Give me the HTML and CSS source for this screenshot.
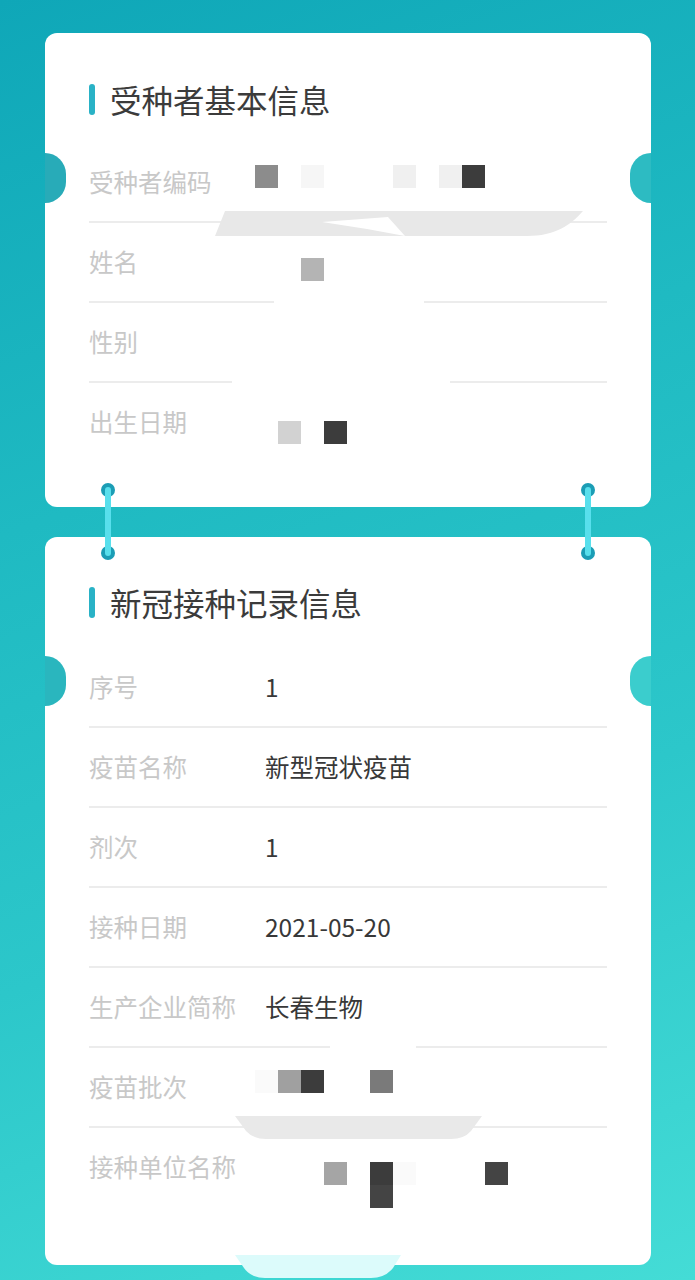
FILE: index.html
```html
<!DOCTYPE html>
<html lang="zh-CN">
<head>
<meta charset="utf-8">
<title>接种信息</title>
<link rel="stylesheet" href="styles.css">
</head>
<body>
<main class="page">
  <section class="card card-basic">
    <span class="notch notch-left"></span>
    <span class="notch notch-right"></span>
    <h2 class="title">受种者基本信息</h2>
    <div class="rows">
      <div class="row">
        <span class="label">受种者编码</span>
        <div class="value">
          <div class="mosaic mz-a">
            <i class="px k8c"></i><i class="px"></i><i class="px kf5"></i><i class="px"></i><i class="px"></i><i class="px"></i><i class="px kf0"></i><i class="px"></i><i class="px kf0"></i><i class="px k3c"></i>
          </div>
        </div>
      </div>
      <div class="row">
        <span class="label">姓名</span>
        <div class="value">
          <div class="mosaic mz-b">
            <i class="px"></i><i class="px"></i><i class="px kb4"></i>
          </div>
        </div>
      </div>
      <div class="row">
        <span class="label">性别</span>
        <div class="value"></div>
      </div>
      <div class="row">
        <span class="label">出生日期</span>
        <div class="value">
          <div class="mosaic mz-c">
            <i class="px"></i><i class="px kd2"></i><i class="px"></i><i class="px k3c"></i>
          </div>
        </div>
      </div>
    </div>
    <svg class="smudge smudge-1" viewBox="0 0 368 25" aria-hidden="true">
      <path d="M10 0 H368 C356 14 340 25 312 25 H0 Z" fill="#e8e8e8"/>
      <path d="M107 11 L173 6 L190 25 L152 18 Z" fill="#ffffff"/>
    </svg>
    <span class="patch patch-1"></span>
    <span class="patch patch-2"></span>
  </section>

  <section class="card card-record">
    <span class="notch notch-left"></span>
    <span class="notch notch-right"></span>
    <span class="link link-left"><i class="dot"></i><i class="dot"></i></span>
    <span class="link link-right"><i class="dot"></i><i class="dot"></i></span>
    <h2 class="title">新冠接种记录信息</h2>
    <div class="rows">
      <div class="row">
        <span class="label">序号</span>
        <div class="value">1</div>
      </div>
      <div class="row">
        <span class="label">疫苗名称</span>
        <div class="value">新型冠状疫苗</div>
      </div>
      <div class="row">
        <span class="label">剂次</span>
        <div class="value">1</div>
      </div>
      <div class="row">
        <span class="label">接种日期</span>
        <div class="value">2021-05-20</div>
      </div>
      <div class="row">
        <span class="label">生产企业简称</span>
        <div class="value">长春生物</div>
      </div>
      <div class="row">
        <span class="label">疫苗批次</span>
        <div class="value">
          <div class="mosaic mz-d">
            <i class="px kfa"></i><i class="px ka0"></i><i class="px k3c"></i><i class="px"></i><i class="px"></i><i class="px k7a"></i>
          </div>
        </div>
      </div>
      <div class="row">
        <span class="label">接种单位名称</span>
        <div class="value">
          <div class="mosaic mz-e">
            <i class="px"></i><i class="px"></i><i class="px"></i><i class="px ka5"></i><i class="px"></i><i class="px k3c"></i><i class="px kfa"></i><i class="px"></i><i class="px"></i><i class="px"></i><i class="px k44"></i>
            <i class="px"></i><i class="px"></i><i class="px"></i><i class="px"></i><i class="px"></i><i class="px k44"></i>
          </div>
        </div>
      </div>
    </div>
    <span class="patch patch-3"></span>
    <svg class="smudge smudge-2" viewBox="0 0 247 23" aria-hidden="true">
      <path d="M0 0 H247 L236 15 Q229 23 216 23 H31 Q18 23 11 15 Z" fill="#e9e9e9"/>
    </svg>
    <svg class="smudge smudge-3" viewBox="0 0 166 23" aria-hidden="true">
      <path d="M0 0 H166 L158 13 Q150 23 136 23 H30 Q16 23 9 13 Z" fill="#dcfbfb"/>
    </svg>
  </section>
</main>
</body>
</html>
```

FILE: styles.css
```css
* { box-sizing: border-box; }

html, body {
  margin: 0;
  padding: 0;
}

body {
  width: 695px;
  height: 1280px;
  overflow: hidden;
  font-family: "Noto Sans CJK SC", "Noto Sans", sans-serif;
  background: linear-gradient(160deg, #0fa7b8 0%, #1fbac2 35%, #2cc7ca 65%, #44dcd6 100%);
}

.page {
  padding: 33px 44px 0 45px;
}

.card {
  position: relative;
  width: 606px;
  background: #ffffff;
  border-radius: 12px;
  padding: 46px 44px 46px;
}

.card-record {
  margin-top: 30px;
  padding-top: 45px;
}

.title {
  display: flex;
  align-items: center;
  gap: 15px;
  margin: 0 0 24px;
  height: 40px;
  font-size: 31.5px;
  font-weight: 400;
  line-height: 40px;
  color: #3b3b3b;
}

.card-record .title {
  margin-bottom: 26px;
}

.title::before {
  content: "";
  width: 6px;
  height: 31px;
  border-radius: 3px;
  background: #29b2c6;
}

.row {
  display: flex;
  align-items: flex-start;
  padding: 25px 0 25px;
  border-bottom: 2px solid #ececec;
  font-size: 24.5px;
  line-height: 28px;
}

.row:last-child {
  border-bottom: none;
}

.label {
  flex: 0 0 176px;
  color: #c8c8c8;
}

.value {
  flex: 1;
  min-height: 28px;
  color: #383838;
}

/* pixelated redaction blocks */
.mosaic {
  display: grid;
  grid-template-columns: repeat(11, 23px);
  grid-auto-rows: 23px;
  margin-left: -10px;
}

.px { display: block; }
.k8c { background: #8c8c8c; }
.kf5 { background: #f6f6f6; }
.kf0 { background: #f0f0f0; }
.k3c { background: #3c3c3c; }
.kb4 { background: #b4b4b4; }
.kd2 { background: #d2d2d2; }
.kfa { background: #fafafa; }
.ka0 { background: #a0a0a0; }
.k7a { background: #7a7a7a; }
.ka5 { background: #a5a5a5; }
.k44 { background: #444444; }

.mz-a { margin-top: -3px; margin-bottom: 8px; }
.mz-b { margin-top: 10px; margin-bottom: -5px; }
.mz-c { margin-top: 13px; margin-bottom: -8px; }
.mz-d { margin-top: -3px; margin-bottom: 8px; }
.mz-e { margin-top: 9px; margin-bottom: -14px; }

/* ticket notches */
.notch {
  position: absolute;
  top: 120px;
  width: 21px;
  height: 50px;
}

.notch-left {
  left: 0;
  border-radius: 0 25px 25px 0 / 0 25px 25px 0;
  background: #28abb8;
}

.notch-right {
  right: 0;
  border-radius: 25px 0 0 25px / 25px 0 0 25px;
  background: #2dbbc2;
}

.card-record .notch { top: 119px; }
.card-record .notch-left { background: #2ab6be; }
.card-record .notch-right { background: #3bcdcd; }

/* connectors between the two cards */
.link {
  position: absolute;
  top: -54px;
  width: 14px;
  height: 77px;
  display: flex;
  flex-direction: column;
  justify-content: space-between;
  align-items: center;
}

.link-left { left: 56px; }
.link-right { left: 536px; }

.link::after {
  content: "";
  position: absolute;
  top: 4px;
  bottom: 4px;
  left: 4px;
  width: 6px;
  border-radius: 3px;
  background: #58dfec;
}

.dot {
  display: block;
  width: 14px;
  height: 14px;
  border-radius: 50%;
  background: #1b9db5;
}

/* retouch artefacts lying over the card */
.smudge {
  position: absolute;
  display: block;
}

.smudge-1 { left: 170px; top: 178px; width: 368px; height: 25px; }
.smudge-2 { left: 190px; top: 579px; width: 247px; height: 23px; }
.smudge-3 { left: 190px; top: 718px; width: 166px; height: 23px; }

.patch {
  position: absolute;
  height: 8px;
  background: #ffffff;
}

.patch-1 { left: 229px; top: 266px; width: 150px; }
.patch-2 { left: 187px; top: 346px; width: 218px; }
.patch-3 { left: 285px; top: 507px; width: 86px; }
```
